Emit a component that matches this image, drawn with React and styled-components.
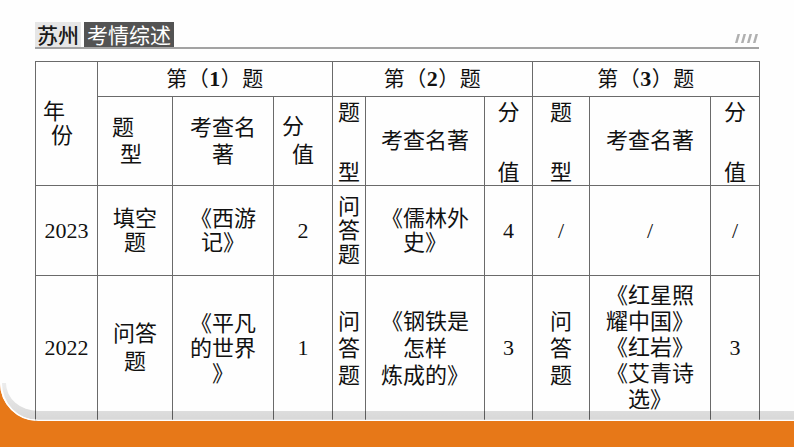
import React from 'react';
import styled, { createGlobalStyle } from 'styled-components';

const Global = createGlobalStyle`
  html, body { margin: 0; padding: 0; background: #fefefe; }
  body { font-family: "Liberation Serif", "Noto Sans CJK SC", serif; }
`;

const Page = styled.div`
  position: relative;
  width: 794px;
  height: 447px;
  overflow: hidden;
  box-sizing: border-box;
  padding: 22px 0 0 35px;
  background: #fefefe;
`;

const TitleBar = styled.div`
  display: flex;
  align-items: flex-end;
  width: 724px;
  height: 25px;
  border-bottom: 2px solid #a3a3a3;
`;

const Tag = styled.div`
  height: 25px;
  line-height: 25px;
  padding: 0 ${p => p.$pad}px;
  margin-right: 3px;
  font-family: "Noto Sans CJK SC", sans-serif;
  font-size: 21px;
  font-weight: ${p => (p.$dark ? 400 : 500)};
  color: ${p => (p.$dark ? '#ffffff' : '#1a1a1a')};
  background: ${p => (p.$dark ? '#535353' : '#e6e6e6')};
`;

const Spacer = styled.div`
  flex: 1;
`;

const Stripes = styled.svg`
  margin: 0 0 4px 0;
  display: block;
`;

const Table = styled.table`
  margin-top: 12px;
  width: 724px;
  table-layout: fixed;
  border-collapse: collapse;
  border: 1.5px solid #333;
  color: #111;
`;

const Row = styled.tr`
  height: ${p => p.$h}px;
`;

const Cell = styled.td`
  padding: 0;
  border: 1px solid #6a6a6a;
  text-align: ${p => p.$align || 'center'};
  vertical-align: middle;
  font-family: "Liberation Serif", "Noto Sans CJK SC", serif;
  font-size: 22px;
  line-height: ${p => p.$lh || 26}px;
`;

const Group = styled(Cell)`
  line-height: 34px;
  font-size: 21px;
  letter-spacing: 0.5px;
`;

const Digit = styled.span`
  font-family: "Liberation Serif", serif;
  font-weight: bold;
  font-size: 22px;
`;

const Num = styled.span`
  font-family: "Liberation Serif", serif;
  font-size: 22px;
`;

const Line = styled.div`
  padding-left: ${p => p.$indent || 0}px;
`;

const Spread = styled.div`
  display: flex;
  flex-direction: column;
  justify-content: space-between;
  align-items: center;
  height: 88px;
  box-sizing: border-box;
  padding-top: 4px;
  line-height: 24px;
`;

const Footer = styled.svg`
  position: absolute;
  left: 0;
  bottom: 0;
  display: block;
`;

const Stack = ({ lines }) => (
  <>
    {lines.map((t, i) => (
      <div key={i}>{t}</div>
    ))}
  </>
);

export default function App() {
  return (
    <>
      <Global />
      <Page>
        <TitleBar>
          <Tag $pad={2}>苏州</Tag>
          <Tag $dark $pad={3}>考情综述</Tag>
          <Spacer />
          <Stripes width="24" height="9" viewBox="0 0 24 9">
            {[0, 6, 12, 18].map(x => (
              <polygon key={x} points={`${x + 2.5},0 ${x + 5},0 ${x + 2.5},9 ${x},9`} fill="#b0b0b0" />
            ))}
          </Stripes>
        </TitleBar>

        <Table>
          <colgroup>
            {[62, 75, 101, 59, 33, 119, 48, 57, 121, 49].map((w, i) => (
              <col key={i} style={{ width: w }} />
            ))}
          </colgroup>
          <tbody>
            <Row $h={35}>
              <Cell rowSpan={2} $align="left" $lh={24}>
                <Line $indent={7}>年</Line>
                <Line $indent={15}>份</Line>
              </Cell>
              <Group colSpan={3}>第（<Digit>1</Digit>）题</Group>
              <Group colSpan={3}>第（<Digit>2</Digit>）题</Group>
              <Group colSpan={3}>第（<Digit>3</Digit>）题</Group>
            </Row>
            <Row $h={88}>
              <Cell $align="left" $lh={27}>
                <Line $indent={14}>题</Line>
                <Line $indent={22}>型</Line>
              </Cell>
              <Cell $lh={27}>
                <Stack lines={['考查名', '著']} />
              </Cell>
              <Cell $align="left" $lh={28}>
                <Line $indent={8}>分</Line>
                <Line $indent={18}>值</Line>
              </Cell>
              <Cell>
                <Spread>
                  <div>题</div>
                  <div>型</div>
                </Spread>
              </Cell>
              <Cell>考查名著</Cell>
              <Cell>
                <Spread>
                  <div>分</div>
                  <div>值</div>
                </Spread>
              </Cell>
              <Cell>
                <Spread>
                  <div>题</div>
                  <div>型</div>
                </Spread>
              </Cell>
              <Cell>考查名著</Cell>
              <Cell>
                <Spread>
                  <div>分</div>
                  <div>值</div>
                </Spread>
              </Cell>
            </Row>
            <Row $h={90}>
              <Cell><Num>2023</Num></Cell>
              <Cell $lh={24}><Stack lines={['填空', '题']} /></Cell>
              <Cell $lh={24}><Stack lines={['《西游', '记》']} /></Cell>
              <Cell><Num>2</Num></Cell>
              <Cell $lh={24}><Stack lines={['问', '答', '题']} /></Cell>
              <Cell $lh={24}><Stack lines={['《儒林外', '史》']} /></Cell>
              <Cell><Num>4</Num></Cell>
              <Cell><Num>/</Num></Cell>
              <Cell><Num>/</Num></Cell>
              <Cell><Num>/</Num></Cell>
            </Row>
            <Row $h={145}>
              <Cell><Num>2022</Num></Cell>
              <Cell $lh={28}><Stack lines={['问答', '题']} /></Cell>
              <Cell $lh={25}><Stack lines={['《平凡', '的世界', '》']} /></Cell>
              <Cell><Num>1</Num></Cell>
              <Cell $lh={27}><Stack lines={['问', '答', '题']} /></Cell>
              <Cell $lh={27}><Stack lines={['《钢铁是', '怎样', '炼成的》']} /></Cell>
              <Cell><Num>3</Num></Cell>
              <Cell $lh={27}><Stack lines={['问', '答', '题']} /></Cell>
              <Cell $lh={26}>
                <Stack lines={['《红星照', '耀中国》', '《红岩》', '《艾青诗', '选》']} />
              </Cell>
              <Cell><Num>3</Num></Cell>
            </Row>
          </tbody>
        </Table>

        <Footer width="794" height="64" viewBox="0 0 794 64">
          <defs>
            <linearGradient id="band" x1="0" y1="0" x2="0" y2="1">
              <stop offset="0" stopColor="#000" stopOpacity="0.07" />
              <stop offset="1" stopColor="#000" stopOpacity="0.15" />
            </linearGradient>
          </defs>
          <path d="M2 0 A36 37 0 0 0 38 37 H794 V28 H38 A32 28 0 0 1 6 0 Z" fill="url(#band)" />
          <path d="M0 0 A38 38 0 0 0 38 38 H794 V64 H0 Z" fill="#e77818" />
          <path d="M0.8 0 A37.2 37.2 0 0 0 38 37.4 H794" fill="none" stroke="#ffffff" strokeWidth="1.4" />
        </Footer>
      </Page>
    </>
  );
}
